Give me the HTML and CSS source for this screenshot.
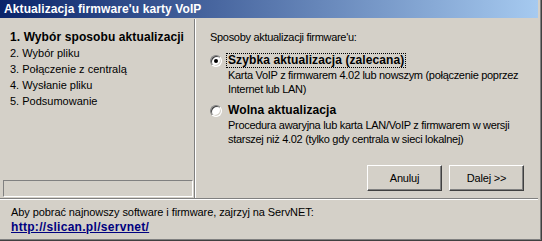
FILE: index.html
```html
<!doctype html>
<html lang="pl">
<head>
  <meta charset="UTF-8">
  <title>Aktualizacja firmware'u karty VoIP</title>
  <link rel="stylesheet" href="styles.css">
</head>
<body>
  <div class="window">
    <div class="titlebar">Aktualizacja firmware'u karty VoIP</div>
    <div class="main">
      <div class="steps">
        <ol class="step-list">
          <li class="current">1. Wybór sposobu aktualizacji</li>
          <li>2. Wybór pliku</li>
          <li>3. Połączenie z centralą</li>
          <li>4. Wysłanie pliku</li>
          <li>5. Podsumowanie</li>
        </ol>
        <div class="status"></div>
      </div>
      <div class="content">
        <p class="intro">Sposoby aktualizacji firmware'u:</p>
        <div class="option">
          <span class="radio checked"></span>
          <div>
            <span class="option-title focused">Szybka aktualizacja (zalecana)</span>
            <div class="option-desc">Karta VoIP z firmwarem 4.02 lub nowszym (połączenie poprzez<br>Internet lub LAN)</div>
          </div>
        </div>
        <div class="option">
          <span class="radio"></span>
          <div>
            <span class="option-title">Wolna aktualizacja</span>
            <div class="option-desc">Procedura awaryjna lub karta LAN/VoIP z firmwarem w wersji<br>starszej niż 4.02 (tylko gdy centrala w sieci lokalnej)</div>
          </div>
        </div>
        <div class="buttons">
          <button class="btn">Anuluj</button>
          <button class="btn">Dalej &gt;&gt;</button>
        </div>
      </div>
    </div>
    <div class="footer">
      <div class="footer-text">Aby pobrać najnowszy software i firmware, zajrzyj na ServNET:</div>
      <a class="link" href="#">http://slican.pl/servnet/</a>
    </div>
  </div>
</body>
</html>
```

FILE: styles.css
```css
body {
    margin: 0;
    background: #d4d0c8;
    font-family: "Liberation Sans", Arial, sans-serif;
    font-size: 11px;
    color: #000;
}
.window {
    width: 542px;
    height: 241px;
    box-sizing: border-box;
    padding: 0 4px 4px 0;
    background: #d4d0c8;
    box-shadow: inset -1px -1px 0 #404040, inset -2px -2px 0 #808080;
}
.titlebar {
    height: 18px;
    margin-bottom: 1px;
    padding-left: 4px;
    background: linear-gradient(to right, #0a246a, #a6caf0);
    color: #fff;
    font-size: 12px;
    font-weight: bold;
    letter-spacing: 0.1px;
    line-height: 19px;
}
.main {
    display: flex;
    height: 179px;
    border-bottom: 1px solid #808080;
}
.steps {
    width: 194px;
    display: flex;
    flex-direction: column;
    border-right: 1px solid #808080;
}
.step-list {
    list-style: none;
    margin: 0;
    padding: 10px 0 0 10px;
    line-height: 16px;
    flex: 1;
}
.step-list .current {
    font-size: 12px;
    font-weight: bold;
    letter-spacing: 0.1px;
}
.status {
    height: 15px;
    margin: 0 1px 1px 3px;
    border: 1px solid;
    border-color: #808080 #fff #fff #808080;
}
.content {
    flex: 1;
    display: flex;
    flex-direction: column;
    padding: 11px 14px 7px 14px;
    border-left: 1px solid #fff;
    line-height: 14px;
    letter-spacing: -0.3px;
    white-space: nowrap;
}
.intro {
    margin: 0 0 9px 0;
}
.option {
    display: flex;
    margin-bottom: 7px;
}
.radio {
    position: relative;
    width: 10px;
    height: 10px;
    margin: 2px 6px 0 0;
    flex: none;
    border: 1px solid;
    border-color: #808080 #fff #fff #808080;
    border-radius: 50%;
    background: #fff;
    box-shadow: inset 1px 1px 0 #404040, inset -1px -1px 0 #d4d0c8;
}
.radio.checked:after {
    content: '';
    position: absolute;
    left: 3px;
    top: 3px;
    width: 4px;
    height: 4px;
    border-radius: 50%;
    background: #000;
}
.option-title {
    display: inline-block;
    font-size: 12px;
    font-weight: bold;
    letter-spacing: 0.1px;
    padding: 0 1px;
    margin-left: -2px;
    border: 1px dotted transparent;
    line-height: 13px;
}
.option-title.focused {
    border-color: #000;
}
.buttons {
    margin-top: auto;
    display: flex;
    justify-content: flex-end;
    gap: 7px;
}
.btn {
    width: 75px;
    height: 26px;
    padding: 0;
    font: inherit;
    letter-spacing: -0.2px;
    background: #d4d0c8;
    border: 1px solid;
    border-color: #fff #404040 #404040 #fff;
    box-shadow: inset -1px -1px 0 #808080;
}
.footer {
    border-top: 1px solid #fff;
    padding: 5px 0 0 11px;
    line-height: 15px;
}
.footer-text {
    letter-spacing: -0.08px;
}
.link {
    color: #000080;
    font-size: 12px;
    font-weight: bold;
    letter-spacing: 0.3px;
}
```
